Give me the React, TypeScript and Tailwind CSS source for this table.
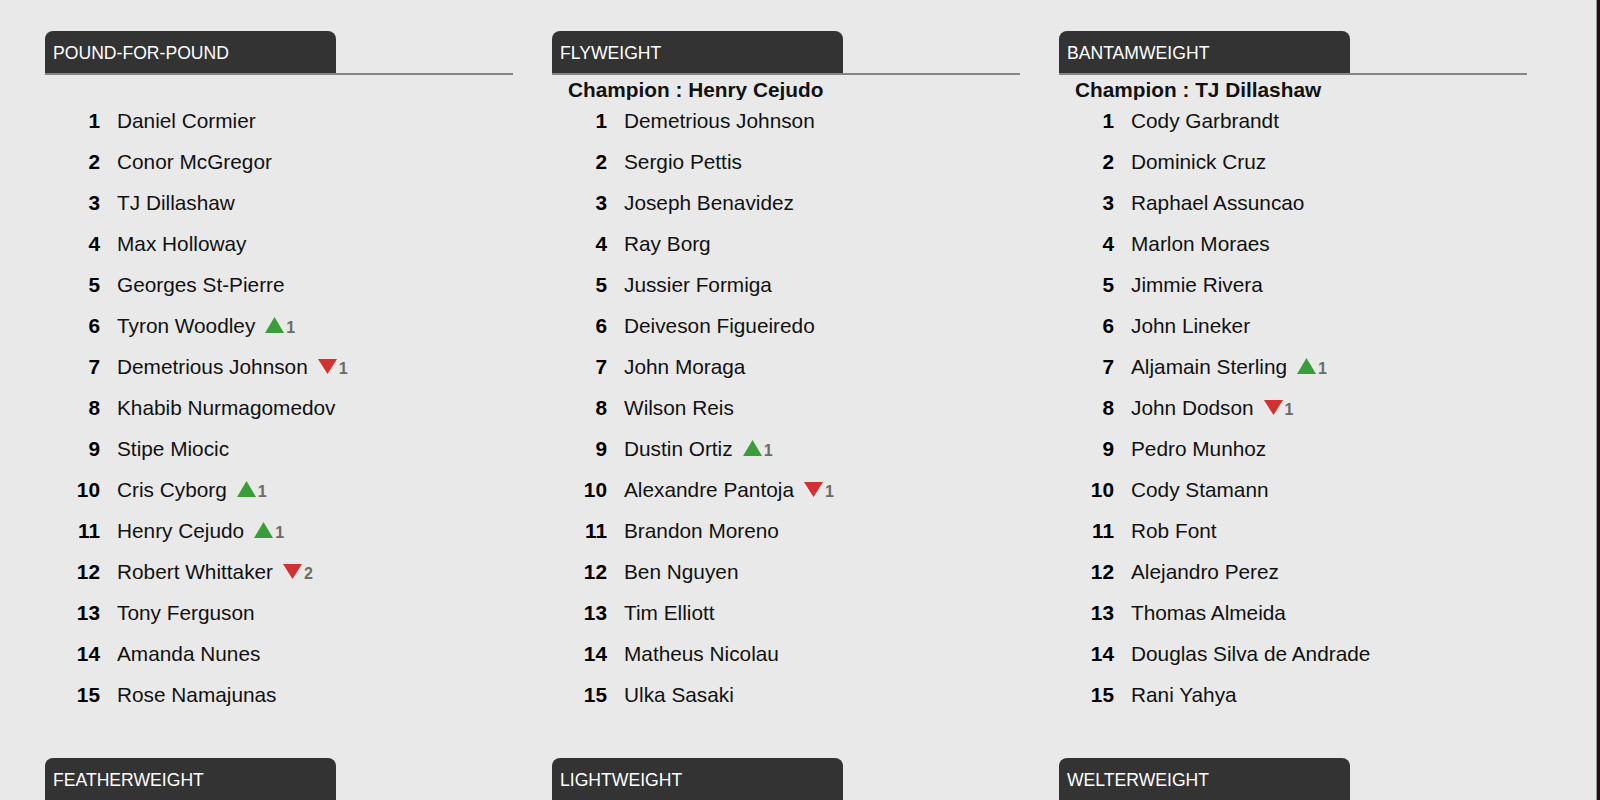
import React from "react";

interface Fighter {
  name: string;
  move?: number; // positive = up, negative = down
}

interface Division {
  title: string;
  champion?: string;
  fighters: Fighter[];
}

const f = (name: string, move?: number): Fighter => ({ name, move });

const divisions: Division[] = [
  {
    title: "POUND-FOR-POUND",
    fighters: [
      f("Daniel Cormier"),
      f("Conor McGregor"),
      f("TJ Dillashaw"),
      f("Max Holloway"),
      f("Georges St-Pierre"),
      f("Tyron Woodley", 1),
      f("Demetrious Johnson", -1),
      f("Khabib Nurmagomedov"),
      f("Stipe Miocic"),
      f("Cris Cyborg", 1),
      f("Henry Cejudo", 1),
      f("Robert Whittaker", -2),
      f("Tony Ferguson"),
      f("Amanda Nunes"),
      f("Rose Namajunas"),
    ],
  },
  {
    title: "FLYWEIGHT",
    champion: "Henry Cejudo",
    fighters: [
      f("Demetrious Johnson"),
      f("Sergio Pettis"),
      f("Joseph Benavidez"),
      f("Ray Borg"),
      f("Jussier Formiga"),
      f("Deiveson Figueiredo"),
      f("John Moraga"),
      f("Wilson Reis"),
      f("Dustin Ortiz", 1),
      f("Alexandre Pantoja", -1),
      f("Brandon Moreno"),
      f("Ben Nguyen"),
      f("Tim Elliott"),
      f("Matheus Nicolau"),
      f("Ulka Sasaki"),
    ],
  },
  {
    title: "BANTAMWEIGHT",
    champion: "TJ Dillashaw",
    fighters: [
      f("Cody Garbrandt"),
      f("Dominick Cruz"),
      f("Raphael Assuncao"),
      f("Marlon Moraes"),
      f("Jimmie Rivera"),
      f("John Lineker"),
      f("Aljamain Sterling", 1),
      f("John Dodson", -1),
      f("Pedro Munhoz"),
      f("Cody Stamann"),
      f("Rob Font"),
      f("Alejandro Perez"),
      f("Thomas Almeida"),
      f("Douglas Silva de Andrade"),
      f("Rani Yahya"),
    ],
  },
  // below the fold, only the tabs are in view
  { title: "FEATHERWEIGHT", fighters: [] },
  { title: "LIGHTWEIGHT", fighters: [] },
  { title: "WELTERWEIGHT", fighters: [] },
];

function Move({ value }: { value: number }) {
  const up = value > 0;
  return (
    <span className="ml-[10px] inline-flex items-baseline">
      <svg width="19" height="16" viewBox="0 0 19 16" className="self-baseline">
        {up ? (
          <polygon points="9.5,0 19,16 0,16" fill="#3a9d3a" />
        ) : (
          <polygon points="0,1 19,1 9.5,16" fill="#d33131" />
        )}
      </svg>
      <span className="ml-[2px] text-[16px] font-bold text-[#6b6b6b]">
        {Math.abs(value)}
      </span>
    </span>
  );
}

function DivisionCard({ division }: { division: Division }) {
  return (
    <section>
      {/* Tab header */}
      <div className="border-b-2 border-[#858585]">
        <div className="h-[42px] w-[291px] rounded-t-[8px] bg-[#333333] pl-2 pt-[12px] text-[17.6px] leading-[20px] text-white">
          {division.title}
        </div>
      </div>

      {/* Champion line */}
      <div className="h-[25px] overflow-hidden pl-4 pt-[3px] text-[20.8px] font-bold leading-[24px] text-[#111]">
        {division.champion ? `Champion : ${division.champion}` : ""}
      </div>

      {/* Ranking list */}
      <ol>
        {division.fighters.map((fighter, i) => (
          <li key={fighter.name} className="flex h-[41px] items-center text-[20.8px] text-[#111]">
            <span className="ml-[21px] w-[34px] text-right font-bold text-black">{i + 1}</span>
            <span className="ml-[17px] flex items-baseline">
              {fighter.name}
              {fighter.move ? <Move value={fighter.move} /> : null}
            </span>
          </li>
        ))}
      </ol>
    </section>
  );
}

export default function App() {
  return (
    <div
      className="flex h-screen overflow-hidden bg-[#e9e9e9]"
      style={{ fontFamily: '"Liberation Sans", Arial, sans-serif' }}
    >
      <main className="flex-1 pl-[45px] pt-[31px]">
        <div className="grid grid-cols-[468px_468px_468px] gap-x-[39px] gap-y-[43px]">
          {divisions.map((d) => (
            <DivisionCard key={d.title} division={d} />
          ))}
        </div>
      </main>
      <div className="w-[4px] border-l border-[#9a9a9a] bg-[#2b0a10]" />
    </div>
  );
}
